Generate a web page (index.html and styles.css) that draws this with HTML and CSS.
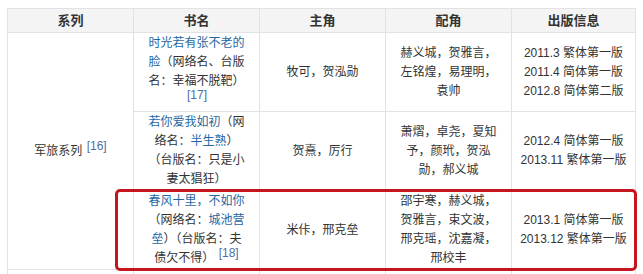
FILE: index.html
```html
<!DOCTYPE html>
<html lang="zh-CN">
<head>
<meta charset="utf-8">
<title>军旅系列</title>
<link rel="stylesheet" href="styles.css">
</head>
<body>
<div class="page">
  <table class="works">
    <colgroup>
      <col class="c1"><col class="c2"><col class="c3"><col class="c4"><col class="c5">
    </colgroup>
    <thead>
      <tr><th>系列</th><th>书名</th><th>主角</th><th>配角</th><th>出版信息</th></tr>
    </thead>
    <tbody>
      <tr>
        <td rowspan="3">军旅系列 <sup class="ref">[16]</sup></td>
        <td><a class="lk">时光若有张不老的脸</a>（网络名、台版名：幸福不脱靶） <sup class="ref">[17]</sup></td>
        <td>牧可，贺泓勋</td>
        <td>赫义城，贺雅言，左铭煌，易理明，袁帅</td>
        <td class="pub">2011.3 繁体第一版<br>2011.4 简体第一版<br>2012.8 简体第二版</td>
      </tr>
      <tr>
        <td><a class="lk">若你爱我如初</a>（网络名：<a class="lk">半生熟</a>）（台版名：只是小妻太猖狂）</td>
        <td>贺熹，厉行</td>
        <td>萧熠，卓尧，夏知予，颜玳，贺泓勋，郝义城</td>
        <td class="pub">2012.4 简体第一版<br>2013.11 繁体第一版</td>
      </tr>
      <tr>
        <td><a class="lk">春风十里，不如你</a>（网络名：<a class="lk">城池营垒</a>）（台版名：夫债欠不得） <sup class="ref">[18]</sup></td>
        <td>米佧，邢克垒</td>
        <td>邵宇寒，赫义城，贺雅言，束文波，邢克瑶，沈嘉凝，邢校丰</td>
        <td class="pub">2013.1 简体第一版<br>2013.12 繁体第一版</td>
      </tr>
      <tr class="more">
        <td>&nbsp;</td><td>&nbsp;</td><td>&nbsp;</td><td>&nbsp;</td><td>&nbsp;</td>
      </tr>
    </tbody>
  </table>
  <div class="highlight"></div>
</div>
</body>
</html>
```

FILE: styles.css
```css
html, body {
  margin: 0;
  padding: 0;
  background: #ffffff;
}

.page {
  position: relative;
  padding: 8px 0 0 7px;
  font-family: "Liberation Sans", "Noto Sans CJK SC", sans-serif;
  font-size: 12px;
  color: #333333;
}

.works {
  border-collapse: collapse;
  table-layout: fixed;
  width: 628px;
}

.c1, .c2, .c3, .c4 { width: 126px; }
.c5 { width: 124px; }

.works th,
.works td {
  border: 1px solid #e2e2e2;
  text-align: center;
  vertical-align: middle;
  line-height: 19px;
  padding: 1px 12px;
  word-break: normal;
}

.works td.pub {
  white-space: nowrap;
  padding: 1px 4px;
}

.works th {
  background: #f4f4f4;
  font-size: 13px;
  font-weight: bold;
  color: #333333;
  padding: 2px 12px;
}

.lk {
  color: #1f67a3;
  text-decoration: none;
}

.ref {
  font-size: 12px;
  color: #4d6fa6;
  vertical-align: super;
  line-height: 0;
  margin-left: 1px;
}

.more td {
  height: 40px;
}

.highlight {
  position: absolute;
  left: 115px;
  top: 189px;
  width: 522px;
  height: 82px;
  box-sizing: border-box;
  border: 3px solid #c4161c;
  border-radius: 5px;
}
```
